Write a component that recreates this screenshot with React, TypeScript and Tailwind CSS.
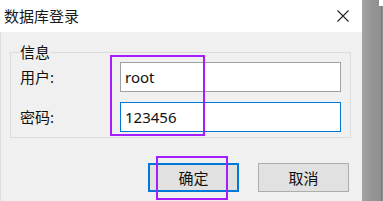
export default function App() {
  const font = "font-['Noto_Sans','Noto_Sans_CJK_SC',sans-serif]";
  return (
    <div className={`relative flex w-[383px] h-[201px] overflow-hidden bg-[#f0f0f0] text-[#111] ${font}`}>
      <div className="flex w-[362px] shrink-0 flex-col bg-[#f0f0f0] shadow-[inset_1px_0_0_#dedede]">
        <div className="flex h-[32px] items-center justify-between bg-white pl-[4px] pr-[13px]">
          <span className="text-[15px] leading-[20px] text-[#1a1a1a]">数据库登录</span>
          <svg width="12" height="12" viewBox="0 0 12 12" className="block">
            <path d="M0.5 0.5 L11.5 11.5 M11.5 0.5 L0.5 11.5" stroke="#222" strokeWidth="1.1" fill="none" />
          </svg>
        </div>
        <div className="flex flex-1 flex-col">
          <fieldset className="ml-[10px] mt-[10px] w-[341px] border border-[#dcdcdc] pb-[5px] pl-[9px] pr-[8px]">
            <legend className="-ml-[1px] px-[1px] text-[15px] leading-[20px]">信息</legend>
            <div className="flex h-[30px] items-center">
              <span className="w-[100px] text-[15px] leading-[20px]">用户:</span>
              <div className="flex h-[30px] w-[221px] items-center border border-[#a0a0a0] bg-white pl-[4px] text-[15px] leading-[20px]">
                root
              </div>
            </div>
            <div className="mt-[10px] flex h-[30px] items-center">
              <span className="w-[100px] text-[15px] leading-[20px]">密码:</span>
              <div className="flex h-[30px] w-[221px] items-center border border-[#0078d7] bg-white pl-[4px] text-[15px] leading-[20px]">
                123456
              </div>
            </div>
          </fieldset>
          <div className="mt-[25px] flex justify-end gap-[19px] pr-[13px]">
            <div className="flex h-[29px] w-[91px] items-center justify-center border-2 border-[#0078d7] bg-[#e1e1e1] text-[15px] leading-[20px]">
              确定
            </div>
            <div className="flex h-[29px] w-[91px] items-center justify-center border border-[#adadad] bg-[#e1e1e1] text-[15px] leading-[20px]">
              取消
            </div>
          </div>
        </div>
      </div>
      <div className="relative flex-1 bg-gradient-to-r from-[#a4a4a4] via-[#939393] to-[#8f8f8f]">
        <div className="absolute right-0 top-0 h-[6px] w-[4px] bg-white" />
        <div className="absolute right-[1px] top-[6px] bottom-0 w-[1px] bg-[#2b8de0]" />
      </div>
      <div className="pointer-events-none absolute left-[110px] top-[55px] h-[81px] w-[95px] border-2 border-[#a51cff]" />
      <div className="pointer-events-none absolute left-[156px] top-[156px] h-[44px] w-[72px] border-2 border-[#a51cff]" />
    </div>
  );
}
